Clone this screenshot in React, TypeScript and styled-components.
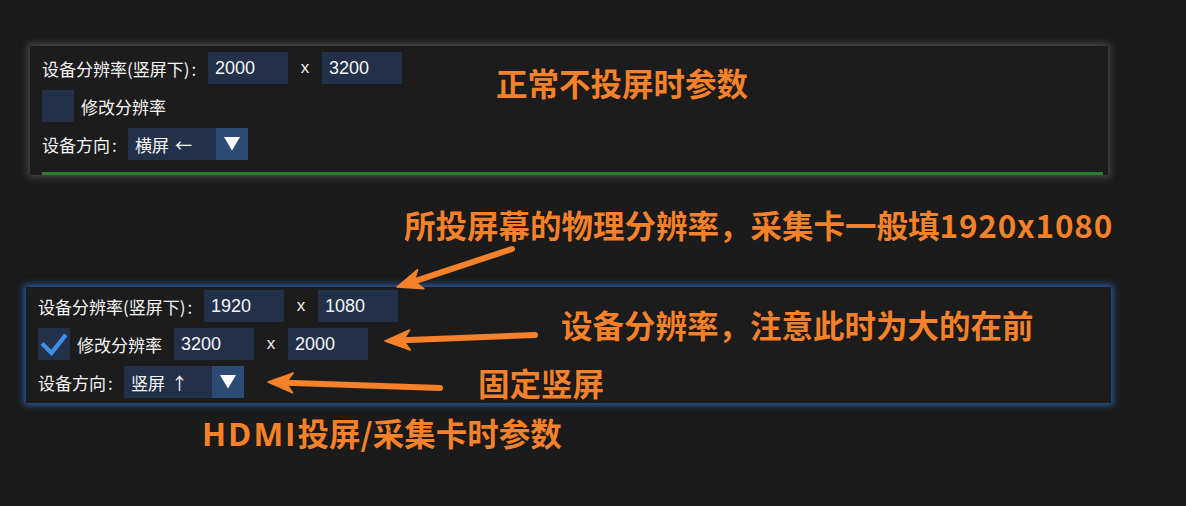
import React from "react";
import styled, { createGlobalStyle } from "styled-components";

const Global = createGlobalStyle`
  html, body { margin: 0; padding: 0; background: #1b1b1b; }
  body { font-family: "Noto Sans CJK SC", "Noto Sans", sans-serif; }
`;

const Page = styled.div`
  position: relative;
  width: 1186px;
  height: 506px;
  overflow: hidden;
  background: #1b1b1b;
  padding-top: 46px;
  box-sizing: border-box;
`;

type Variant = "normal" | "hdmi";

const Panel = styled.section<{ $variant: Variant }>`
  box-sizing: border-box;
  display: flex;
  flex-direction: column;
  gap: 6px;
  background: #1c1c1c;
  margin-left: ${(p) => (p.$variant === "normal" ? 30 : 26)}px;
  margin-top: ${(p) => (p.$variant === "normal" ? 0 : 112)}px;
  width: ${(p) => (p.$variant === "normal" ? 1078 : 1085)}px;
  padding: ${(p) => (p.$variant === "normal" ? "6px 5px 0 12px" : "3px 12px 5px 12px")};
  box-shadow: ${(p) =>
    p.$variant === "normal"
      ? "0 0 7px 2px rgba(120, 120, 120, 0.55)"
      : "0 0 7px 2px rgba(42, 102, 190, 0.9)"};
`;

const Row = styled.div`
  display: flex;
  align-items: center;
  height: 32px;
`;

const Label = styled.span<{ $w?: number }>`
  flex: none;
  width: ${(p) => (p.$w ? `${p.$w}px` : "auto")};
  margin-right: 12px;
  color: #f4f4f4;
  font-size: 17px;
  line-height: 1;
  white-space: nowrap;
`;

const Colon = styled.span`
  margin-left: 2px;
`;

const NumberField = styled.input`
  box-sizing: border-box;
  flex: none;
  width: 80px;
  height: 32px;
  border: none;
  outline: none;
  margin: 0;
  padding: 0 0 0 7px;
  background: #223049;
  color: #f6f6f6;
  font-family: "Liberation Sans", Arial, sans-serif;
  font-size: 18px;
`;

const Times = styled.span`
  flex: none;
  width: 34px;
  text-align: center;
  color: #eeeeee;
  font-family: "Liberation Sans", Arial, sans-serif;
  font-size: 17px;
`;

const CheckBox = styled.div`
  flex: none;
  width: 32px;
  height: 32px;
  margin-right: 7px;
  background: #223049;
  display: flex;
  align-items: center;
  justify-content: center;
`;

const Select = styled.div`
  display: flex;
  height: 32px;
`;

const SelectValue = styled.div`
  box-sizing: border-box;
  width: 88px;
  height: 32px;
  padding-left: 7px;
  display: flex;
  align-items: center;
  gap: 6px;
  background: #223049;
  color: #f6f6f6;
  font-size: 17px;
  white-space: nowrap;
`;

const SelectButton = styled.div`
  width: 32px;
  height: 32px;
  background: #2b4a74;
  display: flex;
  align-items: center;
  justify-content: center;
`;

const GreenBar = styled.div`
  height: 3px;
  margin-top: 6px;
  background: #2d7d2c;
`;

const Note = styled.div<{ $x: number; $y: number }>`
  position: absolute;
  left: ${(p) => p.$x}px;
  top: ${(p) => p.$y}px;
  color: #f5822a;
  font-size: 31.5px;
  font-weight: 700;
  line-height: 1;
  white-space: nowrap;
  text-shadow: 0 0 1px rgba(0, 0, 0, 0.6);
`;

const Latin = styled.span<{ $spacing?: number }>`
  font-family: "Open Sans", "Noto Sans CJK SC", sans-serif;
  font-weight: 700;
  letter-spacing: ${(p) => p.$spacing ?? 0}px;
`;

const Digits = styled.span`
  letter-spacing: 0.8px;
`;

const Overlay = styled.svg`
  position: absolute;
  left: 0;
  top: 0;
  pointer-events: none;
`;

const Triangle = () => (
  <svg width="16" height="14" viewBox="0 0 16 14">
    <polygon points="0,0 16,0 8,13.5" fill="#ffffff" />
  </svg>
);

const Check = () => (
  <svg width="32" height="32" viewBox="0 0 32 32">
    <polyline
      points="5.5,17 13.5,25 26.5,8.5"
      fill="none"
      stroke="#3c8fe6"
      strokeWidth="4.2"
      strokeLinecap="square"
      strokeLinejoin="miter"
    />
  </svg>
);

type ArrowProps = { x1: number; y1: number; x2: number; y2: number };

const Arrow = ({ x1, y1, x2, y2 }: ArrowProps) => {
  const dx = x2 - x1;
  const dy = y2 - y1;
  const len = Math.hypot(dx, dy);
  const ux = dx / len;
  const uy = dy / len;
  const px = -uy;
  const py = ux;
  const head = 25;
  const half = 10;
  const bx = x2 - ux * head;
  const by = y2 - uy * head;
  const nx = x2 - ux * 18;
  const ny = y2 - uy * 18;
  const pts = [
    `${x2},${y2}`,
    `${bx + px * half},${by + py * half}`,
    `${nx},${ny}`,
    `${bx - px * half},${by - py * half}`,
  ].join(" ");
  return (
    <g>
      <line
        x1={x1}
        y1={y1}
        x2={nx}
        y2={ny}
        stroke="#f5822a"
        strokeWidth="6"
        strokeLinecap="round"
      />
      <polygon points={pts} fill="#f5822a" stroke="#f5822a" strokeWidth="1.5" strokeLinejoin="round" />
    </g>
  );
};

type Settings = {
  w: string;
  h: string;
  modify: boolean;
  mw?: string;
  mh?: string;
  orientation: string;
  arrow: string;
};

const SettingsPanel = ({ variant, s }: { variant: Variant; s: Settings }) => (
  <Panel $variant={variant}>
    <Row>
      <Label $w={154}>
        设备分辨率(竖屏下)<Colon>:</Colon>
      </Label>
      <NumberField readOnly value={s.w} />
      <Times>x</Times>
      <NumberField readOnly value={s.h} />
    </Row>
    <Row>
      <CheckBox>{s.modify && <Check />}</CheckBox>
      <Label>修改分辨率</Label>
      {s.modify && (
        <>
          <NumberField readOnly value={s.mw} />
          <Times>x</Times>
          <NumberField readOnly value={s.mh} />
        </>
      )}
    </Row>
    <Row>
      <Label $w={74}>
        设备方向<Colon>:</Colon>
      </Label>
      <Select>
        <SelectValue>
          <span>{s.orientation}</span>
          <span>{s.arrow}</span>
        </SelectValue>
        <SelectButton>
          <Triangle />
        </SelectButton>
      </Select>
    </Row>
    {variant === "normal" && <GreenBar />}
  </Panel>
);

export default function App() {
  return (
    <Page>
      <Global />
      <SettingsPanel
        variant="normal"
        s={{ w: "2000", h: "3200", modify: false, orientation: "横屏", arrow: "←" }}
      />
      <SettingsPanel
        variant="hdmi"
        s={{ w: "1920", h: "1080", modify: true, mw: "3200", mh: "2000", orientation: "竖屏", arrow: "↑" }}
      />

      <Overlay width="1186" height="506" viewBox="0 0 1186 506">
        <Arrow x1={512} y1={249} x2={397} y2={287} />
        <Arrow x1={535} y1={335} x2={385} y2={341} />
        <Arrow x1={440} y1={388} x2={268} y2={382} />
      </Overlay>

      <Note $x={496} $y={67}>正常不投屏时参数</Note>
      <Note $x={404} $y={209}>
        所投屏幕的物理分辨率，采集卡一般填<Digits>1920x1080</Digits>
      </Note>
      <Note $x={561} $y={309}>设备分辨率，注意此时为大的在前</Note>
      <Note $x={478} $y={367}>固定竖屏</Note>
      <Note $x={202} $y={417}>
        <Latin $spacing={2}>HDMI</Latin>投屏/采集卡时参数
      </Note>
    </Page>
  );
}
